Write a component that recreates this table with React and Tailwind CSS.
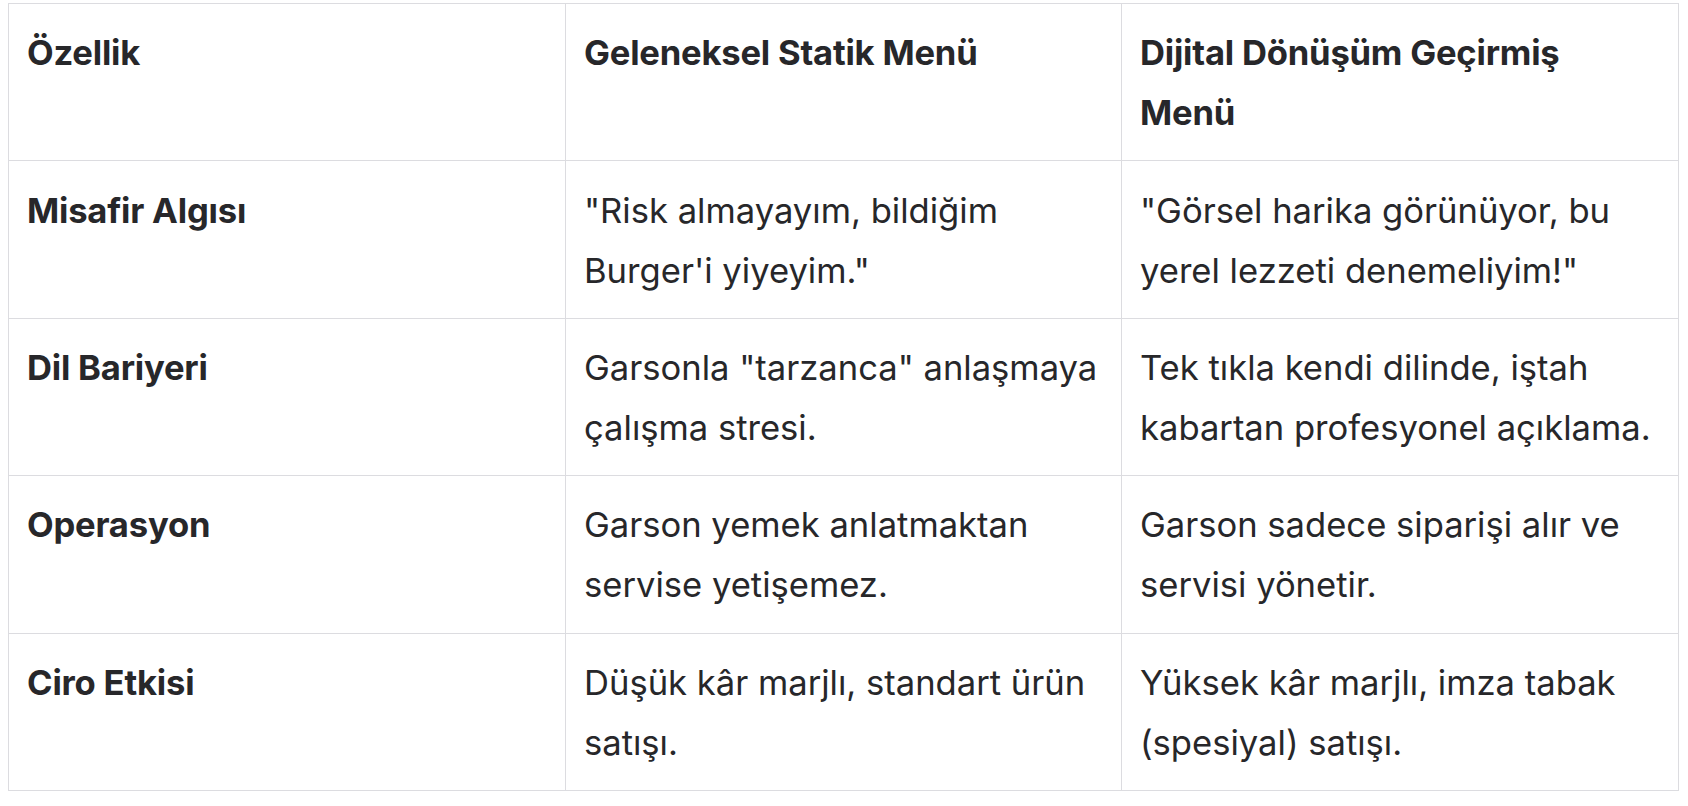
import React from "react";

const rows = [
  ["Misafir Algısı", "\"Risk almayayım, bildiğim Burger'i yiyeyim.\"", "\"Görsel harika görünüyor, bu yerel lezzeti denemeliyim!\""],
  ["Dil Bariyeri", "Garsonla \"tarzanca\" anlaşmaya çalışma stresi.", "Tek tıkla kendi dilinde, iştah kabartan profesyonel açıklama."],
  ["Operasyon", "Garson yemek anlatmaktan servise yetişemez.", "Garson sadece siparişi alır ve servisi yönetir."],
  ["Ciro Etkisi", "Düşük kâr marjlı, standart ürün satışı.", "Yüksek kâr marjlı, imza tabak (spesiyal) satışı."],
];

export default function App() {
  const cell = "border border-[#dcdce0] pl-[18px] pr-[16px] py-[18.2px] align-top text-left";
  return (
    <div className="min-h-screen bg-white pt-[3px] pl-[8px]" style={{ fontFamily: "Inter, 'Noto Sans', sans-serif" }}>
      <table className="w-[1670px] table-fixed border-collapse text-[34.6px] leading-[60px] text-[#27272a]">
        <colgroup>
          <col className="w-[557px]" />
          <col className="w-[556px]" />
          <col className="w-[557px]" />
        </colgroup>
        <thead>
          <tr>
            <th className={cell + " font-bold tracking-[-0.2px]"}>Özellik</th>
            <th className={cell + " font-bold tracking-[-0.2px]"}>Geleneksel Statik Menü</th>
            <th className={cell + " font-bold tracking-[-0.2px]"}>Dijital Dönüşüm Geçirmiş Menü</th>
          </tr>
        </thead>
        <tbody>
          {rows.map((r) => (
            <tr key={r[0]}>
              <td className={cell + " font-bold tracking-[-0.2px]"}>{r[0]}</td>
              <td className={cell}>{r[1]}</td>
              <td className={cell}>{r[2]}</td>
            </tr>
          ))}
        </tbody>
      </table>
    </div>
  );
}
